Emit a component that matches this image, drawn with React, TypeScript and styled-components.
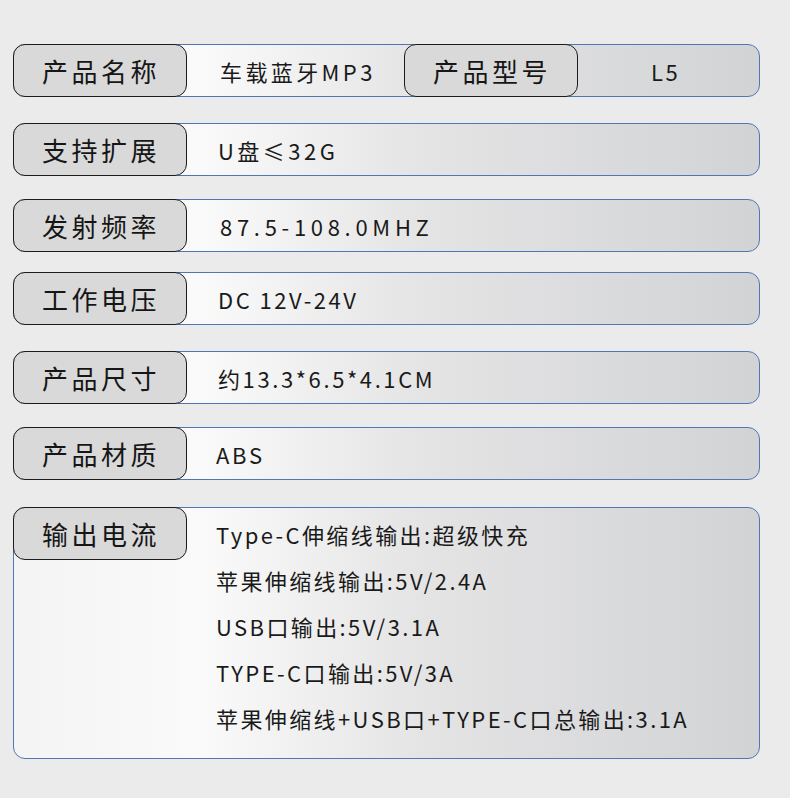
import React from "react";
import styled, { createGlobalStyle } from "styled-components";

const Global = createGlobalStyle`
  html, body { margin: 0; padding: 0; background: #ebebeb; }
  body { font-family: "Noto Sans CJK SC", "Noto Sans", sans-serif; color: #1a1a1a; }
`;

const Page = styled.div`
  width: 790px;
  height: 798px;
  box-sizing: border-box;
  padding: 44px 30px 0 13px;
  background: #ebebeb;
  display: flex;
  flex-direction: column;
`;

const Row = styled.div<{ $gap: number; $tall?: boolean }>`
  margin-top: ${(p) => p.$gap}px;
  height: ${(p) => (p.$tall ? 252 : 53)}px;
  box-sizing: border-box;
  border: 1px solid #5276b4;
  border-radius: 12px;
  background: linear-gradient(to right, #f4f4f4 0%, #fafafa 25%, #e4e4e5 55%, #d2d3d5 100%);
  display: flex;
  align-items: ${(p) => (p.$tall ? "flex-start" : "stretch")};
`;

const Label = styled.div`
  flex: 0 0 174px;
  width: 174px;
  height: 53px;
  box-sizing: border-box;
  margin: -1px 0 -1px -1px;
  padding-left: 2px;
  border: 1px solid #1c1c1c;
  border-radius: 12px;
  background: #d9d9d9;
  display: flex;
  align-items: center;
  justify-content: center;
  font-size: 26px;
  font-weight: 400;
  letter-spacing: 3.5px;
  color: #161616;
`;

const InnerLabel = styled(Label)`
  margin: -1px 0;
`;

const Value = styled.div<{ $w?: number; $ls?: number; $pad?: number }>`
  ${(p) => (p.$w ? `flex: 0 0 ${p.$w}px;` : "flex: 1;")}
  box-sizing: border-box;
  display: flex;
  align-items: center;
  padding-left: ${(p) => p.$pad ?? 31}px;
  font-size: 22px;
  font-weight: 400;
  letter-spacing: ${(p) => p.$ls ?? 2.5}px;
  color: #1a1a1a;
  white-space: nowrap;
`;

const Lines = styled.div`
  display: flex;
  flex-direction: column;
  padding: 3px 0 0 29px;
  font-size: 22px;
  font-weight: 400;
  line-height: 46px;
  letter-spacing: 2.4px;
  white-space: nowrap;
`;

const rows: { label: string; value: string; gap: number; ls: number; pad: number }[] = [
  { label: "支持扩展", value: "U盘≤32G", gap: 26, ls: 3.5, pad: 31 },
  { label: "发射频率", value: "87.5-108.0MHZ", gap: 23, ls: 4.7, pad: 33 },
  { label: "工作电压", value: "DC 12V-24V", gap: 20, ls: 2.5, pad: 31 },
  { label: "产品尺寸", value: "约13.3*6.5*4.1CM", gap: 26, ls: 2.6, pad: 31 },
  { label: "产品材质", value: "ABS", gap: 23, ls: 2.7, pad: 29 },
];

const outputs = [
  "Type-C伸缩线输出:超级快充",
  "苹果伸缩线输出:5V/2.4A",
  "USB口输出:5V/3.1A",
  "TYPE-C口输出:5V/3A",
  "苹果伸缩线+USB口+TYPE-C口总输出:3.1A",
];

export default function App() {
  return (
    <>
      <Global />
      <Page>
        <Row $gap={0}>
          <Label>产品名称</Label>
          <Value $w={217} $ls={3.4} $pad={33}>车载蓝牙MP3</Value>
          <InnerLabel>产品型号</InnerLabel>
          <Value $ls={2.5} $pad={73}>L5</Value>
        </Row>
        {rows.map((r) => (
          <Row key={r.label} $gap={r.gap}>
            <Label>{r.label}</Label>
            <Value $ls={r.ls} $pad={r.pad}>{r.value}</Value>
          </Row>
        ))}
        <Row $gap={27} $tall>
          <Label>输出电流</Label>
          <Lines>
            {outputs.map((o) => (
              <span key={o}>{o}</span>
            ))}
          </Lines>
        </Row>
      </Page>
    </>
  );
}
